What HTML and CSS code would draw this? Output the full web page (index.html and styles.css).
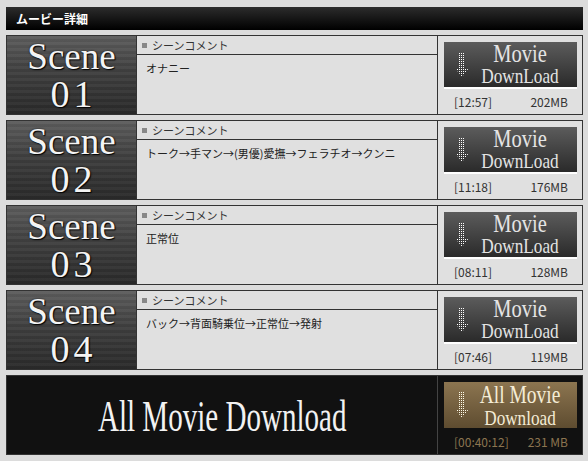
FILE: index.html
```html
<!DOCTYPE html>
<html lang="ja">
<head>
  <meta charset="UTF-8">
  <title>ムービー詳細</title>
  <link rel="stylesheet" href="styles.css">
</head>
<body>

  <svg width="0" height="0" class="defs">
    <defs>
      <pattern id="dots" width="2" height="2" patternUnits="userSpaceOnUse">
        <rect width="1" height="1" fill="#fff"/>
      </pattern>
      <pattern id="dots-gold" width="2" height="2" patternUnits="userSpaceOnUse">
        <rect width="1" height="1" fill="#fffbe8"/>
      </pattern>
    </defs>
  </svg>

  <div class="page">
    <div class="title">ムービー詳細</div>

    <div class="row">
      <div class="scene"><span class="scene-word">Scene</span><span class="scene-num">01</span></div>
      <div class="comment">
        <div class="comment-head"><span class="bullet"></span>シーンコメント</div>
        <div class="comment-body">オナニー</div>
      </div>
      <div class="dl">
        <a class="dl-btn" href="#">
          <svg class="arrow" width="14" height="24" viewBox="0 0 14 24"><path d="M4 0h6v15h4l-7 9-7-9h4z" fill="url(#dots)"/></svg>
          <span class="dl-text"><span class="dl-big">Movie</span><span class="dl-small">DownLoad</span></span>
        </a>
        <div class="dl-info"><span>[12:57]</span><span>202MB</span></div>
      </div>
    </div>

    <div class="row">
      <div class="scene"><span class="scene-word">Scene</span><span class="scene-num">02</span></div>
      <div class="comment">
        <div class="comment-head"><span class="bullet"></span>シーンコメント</div>
        <div class="comment-body">トーク→手マン→(男優)愛撫→フェラチオ→クンニ</div>
      </div>
      <div class="dl">
        <a class="dl-btn" href="#">
          <svg class="arrow" width="14" height="24" viewBox="0 0 14 24"><path d="M4 0h6v15h4l-7 9-7-9h4z" fill="url(#dots)"/></svg>
          <span class="dl-text"><span class="dl-big">Movie</span><span class="dl-small">DownLoad</span></span>
        </a>
        <div class="dl-info"><span>[11:18]</span><span>176MB</span></div>
      </div>
    </div>

    <div class="row">
      <div class="scene"><span class="scene-word">Scene</span><span class="scene-num">03</span></div>
      <div class="comment">
        <div class="comment-head"><span class="bullet"></span>シーンコメント</div>
        <div class="comment-body">正常位</div>
      </div>
      <div class="dl">
        <a class="dl-btn" href="#">
          <svg class="arrow" width="14" height="24" viewBox="0 0 14 24"><path d="M4 0h6v15h4l-7 9-7-9h4z" fill="url(#dots)"/></svg>
          <span class="dl-text"><span class="dl-big">Movie</span><span class="dl-small">DownLoad</span></span>
        </a>
        <div class="dl-info"><span>[08:11]</span><span>128MB</span></div>
      </div>
    </div>

    <div class="row">
      <div class="scene"><span class="scene-word">Scene</span><span class="scene-num">04</span></div>
      <div class="comment">
        <div class="comment-head"><span class="bullet"></span>シーンコメント</div>
        <div class="comment-body">バック→背面騎乗位→正常位→発射</div>
      </div>
      <div class="dl">
        <a class="dl-btn" href="#">
          <svg class="arrow" width="14" height="24" viewBox="0 0 14 24"><path d="M4 0h6v15h4l-7 9-7-9h4z" fill="url(#dots)"/></svg>
          <span class="dl-text"><span class="dl-big">Movie</span><span class="dl-small">DownLoad</span></span>
        </a>
        <div class="dl-info"><span>[07:46]</span><span>119MB</span></div>
      </div>
    </div>

    <div class="row all">
      <div class="all-label"><span>All Movie Download</span></div>
      <div class="dl all-dl">
        <a class="dl-btn gold" href="#">
          <svg class="arrow" width="14" height="26" viewBox="0 0 14 26"><path d="M4 0h6v17h4l-7 9-7-9h4z" fill="url(#dots-gold)"/></svg>
          <span class="dl-text"><span class="dl-big">All Movie</span><span class="dl-small">Download</span></span>
        </a>
        <div class="dl-info"><span>[00:40:12]</span><span>231 MB</span></div>
      </div>
    </div>
  </div>

</body>
</html>
```

FILE: styles.css
```css
body {
  margin: 0;
  background: #dcdcdc;
  font-family: "Noto Sans CJK JP", "Liberation Sans", sans-serif;
  color: #222;
}

.defs {
  position: absolute;
}

.page {
  padding: 7px 5px 0 6px;
  width: 577px;
}

.title {
  height: 23px;
  line-height: 23px;
  padding-left: 10px;
  background: linear-gradient(#2c2c2c, #000);
  color: #fff;
  font-size: 12px;
  font-weight: bold;
  margin-bottom: 5px;
}

.row {
  display: flex;
  height: 78px;
  border: 1px solid #333;
  background: #e0e0e0;
  margin-bottom: 5px;
}

.scene {
  width: 129px;
  border-right: 1px solid #333;
  display: flex;
  flex-direction: column;
  align-items: center;
  background:
    repeating-linear-gradient(rgba(255,255,255,0.03) 0 3px, rgba(0,0,0,0.05) 3px 6px),
    linear-gradient(#5e5e5e, #404040 45%, #2a2a2a);
  font-family: "Liberation Serif", serif;
  color: #f4f4f4;
  text-shadow: 0 0 2px #111, 1px 1px 1px #000;
}

.scene-word {
  font-size: 37px;
  line-height: 38px;
  margin-top: 2px;
}

.scene-num {
  font-size: 38px;
  line-height: 36px;
  letter-spacing: 4px;
  padding-left: 4px;
}

.comment {
  flex: 1;
  font-size: 11px;
}

.comment-head {
  height: 18px;
  line-height: 19px;
  border-bottom: 1px solid #333;
  padding-left: 5px;
  color: #333;
}

.bullet {
  display: inline-block;
  width: 5px;
  height: 5px;
  background: #888;
  margin-right: 5px;
  vertical-align: 2px;
}

.comment-body {
  padding: 5px 9px;
  font-size: 11px;
}

.dl {
  width: 138px;
  border-left: 1px solid #333;
  padding: 6px 0 0 6px;
}

.dl-btn {
  display: flex;
  align-items: center;
  width: 133px;
  height: 45px;
  background: linear-gradient(#5c5c5c, #2a2a2a);
  border-bottom: 2px solid #fff;
  text-decoration: none;
  color: #e4e4e4;
}

.arrow {
  margin: 0 0 0 11px;
  flex: none;
}

.dl-text {
  flex: 1;
  display: flex;
  flex-direction: column;
  align-items: center;
  font-family: "Liberation Serif", serif;
  transform: scaleX(0.82);
  margin-right: 6px;
}

.dl-big {
  font-size: 25px;
  line-height: 24px;
}

.dl-small {
  font-size: 21px;
  line-height: 21px;
}

.dl-info {
  display: flex;
  justify-content: space-between;
  padding: 4px 9px 0 10px;
  width: 114px;
  font-size: 12px;
  color: #333;
}

.row.all {
  background: #111;
}

.all-label {
  flex: 1;
  display: flex;
  justify-content: center;
  align-items: center;
  font-family: "Liberation Serif", serif;
  color: #f2f2f2;
  font-size: 44px;
}

.all-label span {
  display: inline-block;
  transform: scaleX(0.66);
  margin-top: 2px;
  white-space: nowrap;
}

.all-dl {
  border-left: 1px solid #444;
}

.dl-btn.gold {
  background: linear-gradient(#8c7550, #5e4c30);
  border-bottom: none;
  height: 46px;
  color: #f4ecd6;
}

.dl-btn.gold .dl-text {
  transform: scaleX(0.78);
  margin: 0 2px 0 -4px;
}

.dl-btn.gold .dl-big {
  font-size: 25px;
  line-height: 25px;
}

.dl-btn.gold .dl-small {
  font-size: 22px;
  line-height: 22px;
}

.all-dl .dl-info {
  color: #8c7550;
  padding-top: 5px;
}
```
